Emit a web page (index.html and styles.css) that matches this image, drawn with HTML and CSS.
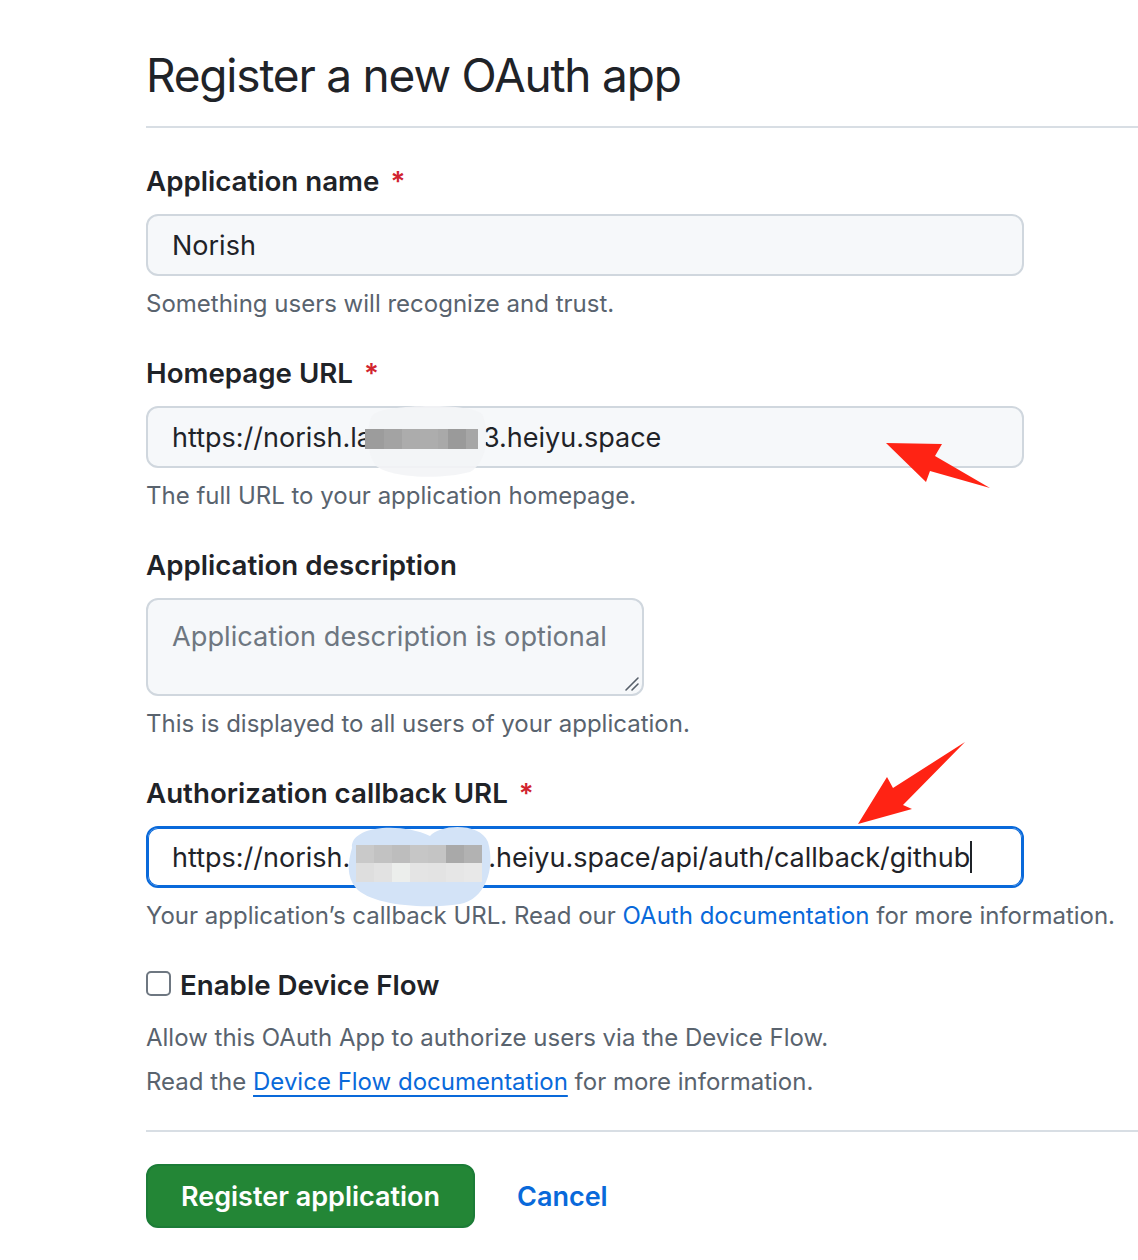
FILE: index.html
```html
<!DOCTYPE html>
<html lang="en">
<head>
<meta charset="utf-8">
<title>Register a new OAuth app</title>
<link rel="stylesheet" href="styles.css">
</head>
<body>
<main class="page">
  <h1 class="page-title">Register a new OAuth app</h1>
  <hr class="rule">

  <form class="oauth-form">
    <div class="field">
      <label class="field-label">Application name <span class="req">*</span></label>
      <div class="input">Norish</div>
      <p class="hint">Something users will recognize and trust.</p>
    </div>

    <div class="field">
      <label class="field-label">Homepage URL <span class="req">*</span></label>
      <div class="input">https://norish.la<span class="masked">xxxxxxx</span>3.heiyu.space</div>
      <p class="hint">The full URL to your application homepage.</p>
    </div>

    <div class="field">
      <label class="field-label">Application description</label>
      <div class="textarea">
        <span class="placeholder">Application description is optional</span>
        <svg class="grip" width="18" height="18" viewBox="0 0 18 18"><path d="M16 4 L4 16 M16 10 L10 16" stroke="#57606a" stroke-width="1.6" fill="none" stroke-linecap="round"/></svg>
      </div>
      <p class="hint">This is displayed to all users of your application.</p>
    </div>

    <div class="field">
      <label class="field-label">Authorization callback URL <span class="req">*</span></label>
      <div class="input input-focus">https://norish.<span class="masked masked-long">xxxxxxxx</span>.heiyu.space/api/auth/callback/github<span class="caret"></span></div>
      <p class="hint">Your application’s callback URL. Read our <a class="link" href="#">OAuth documentation</a> for more information.</p>
    </div>

    <div class="device">
      <label class="check-row"><span class="checkbox"></span><span class="check-label">Enable Device Flow</span></label>
      <p class="hint hint-line">Allow this OAuth App to authorize users via the Device Flow.</p>
      <p class="hint hint-line">Read the <a class="link link-under" href="#">Device Flow documentation</a> for more information.</p>
    </div>
  </form>

  <hr class="rule rule-bottom">

  <div class="actions">
    <button class="btn-primary" type="button">Register application</button>
    <a class="cancel" href="#">Cancel</a>
  </div>
</main>

<svg class="marks" width="1138" height="1260" viewBox="0 0 1138 1260">
  <!-- smudge over the homepage host -->
  <path d="M372 416 C378 404 470 402 482 414 C490 430 488 462 470 472 C440 480 392 478 376 466 C366 452 366 428 372 416 Z" fill="#f3f4f6" opacity="0.9"/>
  <g>
    <rect x="365" y="429" width="19" height="20" fill="#9c9c9c"/>
    <rect x="384" y="429" width="18" height="20" fill="#a3a3a3"/>
    <rect x="402" y="429" width="18" height="20" fill="#acacac"/>
    <rect x="420" y="429" width="18" height="20" fill="#adadad"/>
    <rect x="438" y="429" width="18" height="20" fill="#a9a9a9"/>
    <rect x="448" y="429" width="18" height="20" fill="#9a9a9a"/>
    <rect x="466" y="429" width="12" height="20" fill="#a6a6a6"/>
  </g>

  <!-- smudge over the callback host -->
  <path d="M352 848 C350 826 400 822 430 836 C440 824 480 822 488 842 C496 870 484 900 460 904 C420 910 370 904 356 888 C346 876 348 862 352 848 Z" fill="#d3e3f7"/>
  <g>
    <rect x="356" y="845" width="18" height="18" fill="#c9c9c9"/>
    <rect x="374" y="845" width="18" height="18" fill="#c2c2c2"/>
    <rect x="392" y="845" width="18" height="18" fill="#bdbdbd"/>
    <rect x="410" y="845" width="18" height="18" fill="#c6c6c6"/>
    <rect x="428" y="845" width="18" height="18" fill="#c4c4c4"/>
    <rect x="446" y="845" width="18" height="18" fill="#a9a9a9"/>
    <rect x="464" y="845" width="18" height="18" fill="#b2b2b2"/>
    <rect x="356" y="863" width="18" height="19" fill="#dedede"/>
    <rect x="374" y="863" width="18" height="19" fill="#e2e2e2"/>
    <rect x="392" y="863" width="18" height="19" fill="#eceeec"/>
    <rect x="410" y="863" width="18" height="19" fill="#e4e4e4"/>
    <rect x="428" y="863" width="18" height="19" fill="#e3e3e3"/>
    <rect x="446" y="863" width="18" height="19" fill="#e6e6e6"/>
    <rect x="464" y="863" width="18" height="19" fill="#e8e8e8"/>
  </g>

  <!-- pointer arrows -->
  <polygon points="886,443 942,444 935,456 990,488 930,471 926,482" fill="#ff2314"/>
  <polygon points="858,824 887,777 893,788 965,742 903,805 912,809" fill="#ff2314"/>
</svg>
</body>
</html>
```
FILE: styles.css
```css
* { box-sizing: border-box; }

html, body {
  margin: 0;
  background: #ffffff;
}

body {
  position: relative;
  width: 1138px;
  height: 1260px;
  overflow: hidden;
  font-family: Inter, "Noto Sans", "Liberation Sans", sans-serif;
  color: #1f2328;
}

.page {
  padding: 45px 0 0 146px;
}

.page-title {
  margin: 0;
  font-size: 46px;
  line-height: 60px;
  font-weight: 400;
  letter-spacing: -1.2px;
  color: #1f2328;
}

.rule {
  margin: 21px 0 0;
  height: 2px;
  border: 0;
  background: #d8dee4;
}

.oauth-form {
  display: flex;
  flex-direction: column;
  gap: 30px;
  padding-top: 32px;
}

.field {
  display: flex;
  flex-direction: column;
}

.field-label {
  font-size: 27.7px;
  line-height: 42px;
  font-weight: 600;
  margin-bottom: 12px;
}

.req {
  color: #d1242f;
  margin-left: 4px;
}

.input {
  width: 878px;
  height: 62px;
  border: 2px solid #d0d7de;
  border-radius: 12px;
  background: #f6f8fa;
  padding: 0 24px;
  display: flex;
  align-items: center;
  font-size: 27px;
  color: #1f2328;
  white-space: nowrap;
}

.input-focus {
  background: #ffffff;
  border-color: #0969da;
  box-shadow: inset 0 0 0 1px #0969da;
}

.masked {
  display: inline-block;
  width: 111px;
  color: transparent;
}

.masked-long {
  width: 138px;
}

.caret {
  display: inline-block;
  width: 2px;
  height: 32px;
  margin-left: 0;
  background: #1f2328;
}

.textarea {
  position: relative;
  width: 498px;
  height: 98px;
  border: 2px solid #d0d7de;
  border-radius: 12px;
  background: #f6f8fa;
  padding: 19px 24px;
  font-size: 27.2px;
  line-height: 36px;
}

.placeholder {
  color: #6e7781;
}

.grip {
  position: absolute;
  right: 2px;
  bottom: 2px;
}

.hint {
  margin: 10px 0 0;
  font-size: 24px;
  line-height: 36px;
  color: #59636e;
}

.link {
  color: #0969da;
  text-decoration: none;
}

.link-under {
  text-decoration: underline;
  text-underline-offset: 5px;
  text-decoration-thickness: 2px;
}

.device {
  display: flex;
  flex-direction: column;
}

.check-row {
  display: flex;
  align-items: center;
  gap: 9px;
  height: 42px;
}

.checkbox {
  width: 25px;
  height: 25px;
  border: 2px solid #6e7781;
  border-radius: 5px;
  background: #ffffff;
  margin-top: -4px;
}

.check-label {
  font-size: 27.7px;
  font-weight: 600;
}

.hint-line {
  margin-top: 14px;
}

.hint-line + .hint-line {
  margin-top: 8px;
}

.rule-bottom {
  margin-top: 30px;
}

.actions {
  display: flex;
  align-items: center;
  gap: 42px;
  padding-top: 32px;
}

.btn-primary {
  width: 329px;
  height: 64px;
  border: 2px solid #1c7c37;
  border-radius: 12px;
  background: #238636;
  color: #ffffff;
  font-family: inherit;
  font-size: 27px;
  font-weight: 600;
  padding: 0;
}

.cancel {
  color: #0969da;
  text-decoration: none;
  font-size: 27px;
  font-weight: 600;
}

.marks {
  position: absolute;
  left: 0;
  top: 0;
  pointer-events: none;
}
```
